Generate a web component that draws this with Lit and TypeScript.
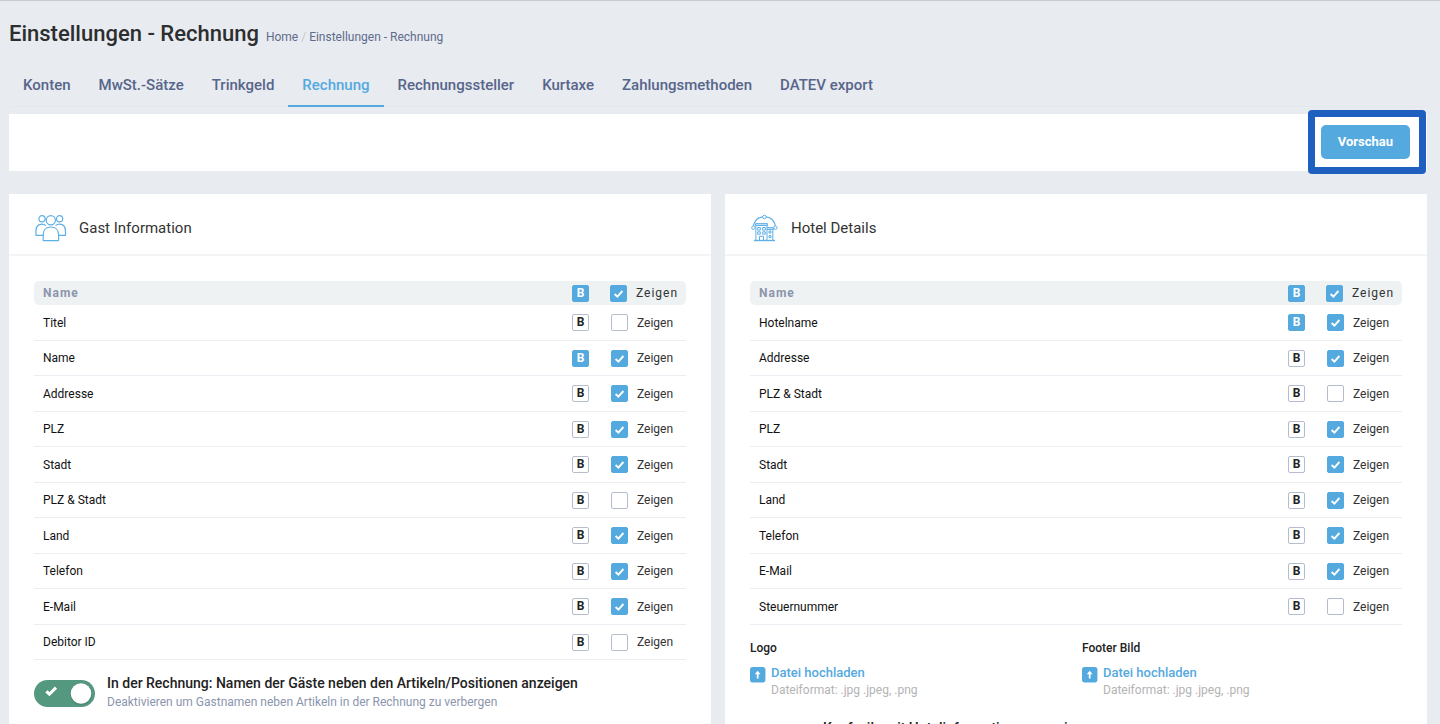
import { LitElement, html, svg, css } from "lit";
import { customElement, property, state } from "lit/decorators.js";
import { classMap } from "lit/directives/class-map.js";

interface Field {
  label: string;
  bold: boolean;
  show: boolean;
}

const field = (label: string, bold: boolean, show: boolean): Field => ({ label, bold, show });

const checkMark = html`<svg class="tick" viewBox="0 0 17 17" aria-hidden="true">
  <path d="M4.6 9 L7.4 11.6 L12.4 6" fill="none" stroke="#fff" stroke-width="1.9" />
</svg>`;

const guestsIcon = svg`<svg width="32" height="28" viewBox="0 0 32 28" fill="none" stroke="#5db0e6" stroke-width="1.2" stroke-linejoin="round" aria-hidden="true">
  <circle cx="7" cy="4.8" r="3.1" />
  <circle cx="24.6" cy="4.8" r="3.1" />
  <circle cx="15.8" cy="6.3" r="4.6" />
  <path d="M8.2 26.2 V20.5 C8.2 16 11 13 15.8 13 S23.6 16 23.6 20.5 V26.2 Q23.6 26.6 23.2 26.6 H8.6 Q8.2 26.6 8.2 26.2 Z" />
  <path d="M8.2 21.3 H1.2 Q0.9 21.3 0.9 21 V17.3 C0.9 12.8 3.4 10.2 7 10.2 C8.6 10.2 10 10.7 11 11.6" />
  <path d="M23.6 21.3 H30.2 Q30.5 21.3 30.5 21 V17.3 C30.5 12.8 28.3 10.2 24.6 10.2 C23 10.2 21.6 10.7 20.6 11.6" />
</svg>`;

const hotelIcon = svg`<svg width="28" height="28" viewBox="0 0 28 28" fill="none" stroke="#5db0e6" stroke-width="1" aria-hidden="true">
  <path d="M2.4 11.8 C3.6 6.6 7 3.4 11.6 2.8 M15.2 2.8 C19.8 3.4 23.2 6.6 24.4 11.8" stroke-width="1.2" />
  <circle cx="13.4" cy="3" r="1.8" />
  <circle cx="2.4" cy="13.7" r="1.7" />
  <circle cx="24.4" cy="13.7" r="1.7" />
  <path d="M4.9 26.4 V11.3 H16 V26.4 M4.4 9.6 H16.6 V11.3 H4.4 Z M16 15.3 H21.8 V26.4 M16 13.6 H22.6 V15.3 H16" />
  <path d="M3 26.5 H24" stroke-width="1.4" />
  <path d="M6.7 13.5 h2.6 v2.6 h-2.6 Z M11.7 13.5 h2.6 v2.6 h-2.6 Z M6.7 17.8 h2.6 v2.4 h-2.6 Z M11.7 17.8 h2.6 v2.4 h-2.6 Z M18 17 h2 v2 h-2 Z M18 21.6 h2 v2 h-2 Z" />
  <path d="M8.5 26.4 V22.3 H12.5 V26.4" />
</svg>`;

const base = css`
  * {
    box-sizing: border-box;
  }
  button,
  input {
    font: inherit;
    margin: 0;
  }
`;

@customElement("field-table")
class FieldTable extends LitElement {
  @property({ attribute: false }) fields: Field[] = [];
  @state() private allBold = true;
  @state() private allShown = true;

  static styles = [
    base,
    css`
      :host {
        display: block;
      }
      .table {
        width: 100%;
        border-collapse: separate;
        border-spacing: 0;
        table-layout: fixed;
        font-size: 12px;
        line-height: 16px;
        color: #111;
      }
      th,
      td {
        padding: 0;
        text-align: left;
        vertical-align: middle;
        font-weight: 400;
      }
      th {
        height: 24px;
        background: #eef2f3;
        letter-spacing: 1px;
      }
      th:first-child {
        padding-left: 9px;
        border-radius: 5px 0 0 5px;
        font-weight: 700;
        color: #8c95ae;
      }
      th:last-child {
        border-radius: 0 5px 5px 0;
      }
      td {
        height: 36px;
        border-bottom: 1px solid #ebeef2;
      }
      tr:nth-child(even) td {
        height: 35px;
      }
      td:first-child {
        padding-left: 9px;
      }
      td:last-child {
        padding-left: 1px;
      }
      .bold-col {
        width: 38px;
      }
      .show-col {
        width: 76px;
      }
      .bold {
        display: grid;
        place-items: center;
        width: 17px;
        height: 17px;
        padding: 0;
        border: 1px solid #b4bccd;
        border-radius: 2px;
        background: #fff;
        color: #222;
        font-size: 12px;
        font-weight: 700;
        line-height: 15px;
        letter-spacing: 0;
      }
      .bold.on {
        border-color: #54a9df;
        background: #54a9df;
        color: #fff;
      }
      .show {
        display: flex;
        align-items: center;
        gap: 9px;
        color: #333;
      }
      .box {
        display: grid;
        flex: none;
        width: 17px;
        height: 17px;
      }
      .check,
      .tick {
        grid-area: 1 / 1;
        width: 17px;
        height: 17px;
      }
      .check {
        appearance: none;
        border: 1px solid #b4bccd;
        border-radius: 2px;
        background: #fff;
      }
      .check:checked {
        border-color: #54a9df;
        background: #54a9df;
      }
      .tick {
        pointer-events: none;
        visibility: hidden;
      }
      .check:checked + .tick {
        visibility: visible;
      }
    `,
  ];

  private boldButton(on: boolean, label: string, toggle: () => void) {
    return html`<button
      type="button"
      class=${classMap({ bold: true, on })}
      aria-pressed=${on ? "true" : "false"}
      aria-label=${`${label} B`}
      @click=${toggle}
    >B</button>`;
  }

  private showBox(on: boolean, toggle: () => void) {
    return html`<label class="show">
      <span class="box"><input class="check" type="checkbox" .checked=${on} @change=${toggle} />${checkMark}</span>
      <span>Zeigen</span>
    </label>`;
  }

  private setField(index: number, change: Partial<Field>) {
    this.fields = this.fields.map((f, i) => (i === index ? { ...f, ...change } : f));
  }

  private toggleAllBold() {
    this.allBold = !this.allBold;
    this.fields = this.fields.map((f) => ({ ...f, bold: this.allBold }));
  }

  private toggleAllShown() {
    this.allShown = !this.allShown;
    this.fields = this.fields.map((f) => ({ ...f, show: this.allShown }));
  }

  render() {
    return html`<table class="table">
      <thead>
        <tr>
          <th scope="col">Name</th>
          <th scope="col" class="bold-col">${this.boldButton(this.allBold, "Name", () => this.toggleAllBold())}</th>
          <th scope="col" class="show-col">${this.showBox(this.allShown, () => this.toggleAllShown())}</th>
        </tr>
      </thead>
      <tbody>
        ${this.fields.map(
          (f, i) => html`<tr>
            <td>${f.label}</td>
            <td>${this.boldButton(f.bold, f.label, () => this.setField(i, { bold: !f.bold }))}</td>
            <td>${this.showBox(f.show, () => this.setField(i, { show: !f.show }))}</td>
          </tr>`
        )}
      </tbody>
    </table>`;
  }
}

@customElement("settings-card")
class SettingsCard extends LitElement {
  @property() heading = "";

  static styles = [
    base,
    css`
      :host {
        display: block;
        background: #fff;
      }
      .head {
        display: flex;
        align-items: center;
        gap: 12px;
        padding: 20px 26px 12px;
        border-bottom: 2px solid #f3f4f6;
      }
      .icon,
      .icon ::slotted(*) {
        display: flex;
      }
      .title {
        margin: 0;
        font-size: 15px;
        line-height: 28px;
        font-weight: 400;
        color: #333;
      }
      .body {
        padding: 25px 25px 24px;
      }
    `,
  ];

  render() {
    return html`
      <header class="head">
        <span class="icon"><slot name="icon"></slot></span>
        <h2 class="title">${this.heading}</h2>
      </header>
      <div class="body"><slot></slot></div>
    `;
  }
}

@customElement("toggle-row")
class ToggleRow extends LitElement {
  @property() heading = "";
  @property() hint = "";

  static styles = [
    base,
    css`
      :host {
        display: block;
      }
      .row {
        display: flex;
        align-items: center;
        gap: 12px;
      }
      .switch {
        display: grid;
        flex: none;
        width: 61px;
        height: 27px;
      }
      .input,
      .art {
        grid-area: 1 / 1;
        width: 61px;
        height: 27px;
      }
      .input {
        appearance: none;
        border-radius: 14px;
        background: #b4bccd;
      }
      .input:checked {
        background: #559880;
      }
      .art {
        pointer-events: none;
      }
      .input:not(:checked) + .art .mark {
        visibility: hidden;
      }
      .input:not(:checked) + .art .knob {
        transform: translateX(-33px);
      }
      .text {
        display: flex;
        flex-direction: column;
      }
      .title {
        font-size: 14px;
        line-height: 18px;
        font-weight: 500;
        color: #222;
      }
      .hint {
        min-height: 20px;
        font-size: 12px;
        line-height: 20px;
        color: #8c95ae;
      }
    `,
  ];

  render() {
    return html`<label class="row">
      <span class="switch">
        <input class="input" type="checkbox" role="switch" .checked=${true} />
        <svg class="art" viewBox="0 0 61 27" aria-hidden="true">
          <path class="mark" d="M12.4 11.3 L15.4 14.2 L22 7.6" fill="none" stroke="#fff" stroke-width="3" />
          <g class="knob">
            <circle cx="47" cy="14" r="11" fill="#3f7864" opacity="0.5" />
            <circle cx="47" cy="13.5" r="10.3" fill="#fff" />
          </g>
        </svg>
      </span>
      <span class="text">
        <span class="title">${this.heading}</span>
        <span class="hint">${this.hint}</span>
      </span>
    </label>`;
  }
}

@customElement("file-upload")
class FileUpload extends LitElement {
  @property() heading = "";

  static styles = [
    base,
    css`
      :host {
        display: block;
      }
      .name {
        margin: 0 0 7px;
        font-size: 12px;
        line-height: 18px;
        font-weight: 500;
        color: #222;
      }
      .row {
        display: flex;
        align-items: flex-start;
        gap: 5px;
      }
      .arrow {
        flex: none;
        margin-top: 3px;
      }
      .text {
        display: flex;
        flex-direction: column;
        align-items: flex-start;
      }
      .link {
        padding: 0;
        border: 0;
        background: none;
        font-size: 13px;
        line-height: 18px;
        font-weight: 500;
        color: #54a9df;
      }
      .format {
        font-size: 12px;
        line-height: 16px;
        color: #b3b3b3;
      }
    `,
  ];

  render() {
    return html`
      <h3 class="name">${this.heading}</h3>
      <div class="row">
        <svg class="arrow" width="16" height="16" viewBox="0 0 16 16" aria-hidden="true">
          <rect width="15.4" height="15.4" rx="2.6" fill="#54a9df" />
          <path d="M7.7 3.8 L10.6 7.2 H8.6 V11.4 H6.8 V7.2 H4.8 Z" fill="#fff" />
        </svg>
        <div class="text">
          <button type="button" class="link">Datei hochladen</button>
          <span class="format">Dateiformat: .jpg .jpeg, .png</span>
        </div>
      </div>
    `;
  }
}

@customElement("app-root")
class AppRoot extends LitElement {
  private tabs = [
    "Konten",
    "MwSt.-Sätze",
    "Trinkgeld",
    "Rechnung",
    "Rechnungssteller",
    "Kurtaxe",
    "Zahlungsmethoden",
    "DATEV export",
  ];

  private guestFields = [
    field("Titel", false, false),
    field("Name", true, true),
    field("Addresse", false, true),
    field("PLZ", false, true),
    field("Stadt", false, true),
    field("PLZ & Stadt", false, false),
    field("Land", false, true),
    field("Telefon", false, true),
    field("E-Mail", false, true),
    field("Debitor ID", false, false),
  ];

  private hotelFields = [
    field("Hotelname", true, true),
    field("Addresse", false, true),
    field("PLZ & Stadt", false, false),
    field("PLZ", false, true),
    field("Stadt", false, true),
    field("Land", false, true),
    field("Telefon", false, true),
    field("E-Mail", false, true),
    field("Steuernummer", false, false),
  ];

  static styles = [
    base,
    css`
      :host {
        display: block;
        height: 100vh;
        overflow-y: auto;
        scrollbar-width: none;
        background: #e8ebf0;
        font-family: Roboto, "Liberation Sans", sans-serif;
      }
      .page {
        padding: 19px 13px 24px 9px;
        border-top: 1px solid #c9cacd;
      }
      .top {
        display: flex;
        align-items: baseline;
        gap: 7px;
      }
      .heading {
        margin: 0;
        font-size: 22px;
        line-height: 28px;
        font-weight: 500;
        color: #2c2e2f;
      }
      .crumbs {
        display: flex;
        gap: 3px;
        font-size: 12px;
        line-height: 16px;
        color: #5f6c8c;
      }
      .crumb {
        color: inherit;
        text-decoration: none;
      }
      .slash {
        color: #c3c7cf;
      }
      .tabs {
        display: flex;
        margin-top: 27px;
        border-bottom: 1px solid #e4e7ec;
      }
      .tab {
        padding: 0 14px 10px;
        margin-bottom: -1px;
        border-bottom: 2px solid transparent;
        font-size: 15px;
        line-height: 20px;
        font-weight: 500;
        color: #57658a;
        text-decoration: none;
      }
      .tab.active {
        border-color: #54a9df;
        color: #54a9df;
      }
      .bar {
        display: flex;
        justify-content: flex-end;
        margin-top: 7px;
        padding: 11px 17px 12px;
        background: #fff;
      }
      .spot {
        position: relative;
      }
      .spot::after {
        content: "";
        position: absolute;
        inset: -15px -16px -15px -13px;
        border: 7px solid #1f5fc0;
        border-radius: 4px;
        pointer-events: none;
      }
      .preview {
        display: block;
        padding: 8px 17px;
        border: 0;
        border-radius: 5px;
        background: #54a9df;
        font-size: 13px;
        line-height: 18px;
        font-weight: 700;
        color: #fff;
      }
      .cards {
        display: grid;
        grid-template-columns: 1fr 1fr;
        gap: 14px;
        margin-top: 23px;
      }
      .option {
        margin-top: 14px;
      }
      .uploads {
        display: grid;
        grid-template-columns: 1fr 1fr;
        gap: 12px;
        margin-top: 14px;
      }
      .after-uploads {
        margin-top: 21px;
      }
    `,
  ];

  render() {
    return html`<main class="page">
      <header class="top">
        <h1 class="heading">Einstellungen - Rechnung</h1>
        <nav class="crumbs">
          <a class="crumb" href="#">Home</a><span class="slash">/</span><a class="crumb" href="#">Einstellungen - Rechnung</a>
        </nav>
      </header>
      <nav class="tabs">
        ${this.tabs.map(
          (t) => html`<a class=${classMap({ tab: true, active: t === "Rechnung" })} href="#">${t}</a>`
        )}
      </nav>
      <div class="bar">
        <div class="spot"><button type="button" class="preview">Vorschau</button></div>
      </div>
      <div class="cards">
        <settings-card heading="Gast Information">
          <span slot="icon">${guestsIcon}</span>
          <field-table .fields=${this.guestFields}></field-table>
          <toggle-row
            class="option"
            heading="In der Rechnung: Namen der Gäste neben den Artikeln/Positionen anzeigen"
            hint="Deaktivieren um Gastnamen neben Artikeln in der Rechnung zu verbergen"
          ></toggle-row>
        </settings-card>
        <settings-card heading="Hotel Details">
          <span slot="icon">${hotelIcon}</span>
          <field-table .fields=${this.hotelFields}></field-table>
          <div class="uploads">
            <file-upload heading="Logo"></file-upload>
            <file-upload heading="Footer Bild"></file-upload>
          </div>
          <toggle-row class="after-uploads" heading="Kopfzeile mit Hotelinformationen anzeigen"></toggle-row>
        </settings-card>
      </div>
    </main>`;
  }
}
